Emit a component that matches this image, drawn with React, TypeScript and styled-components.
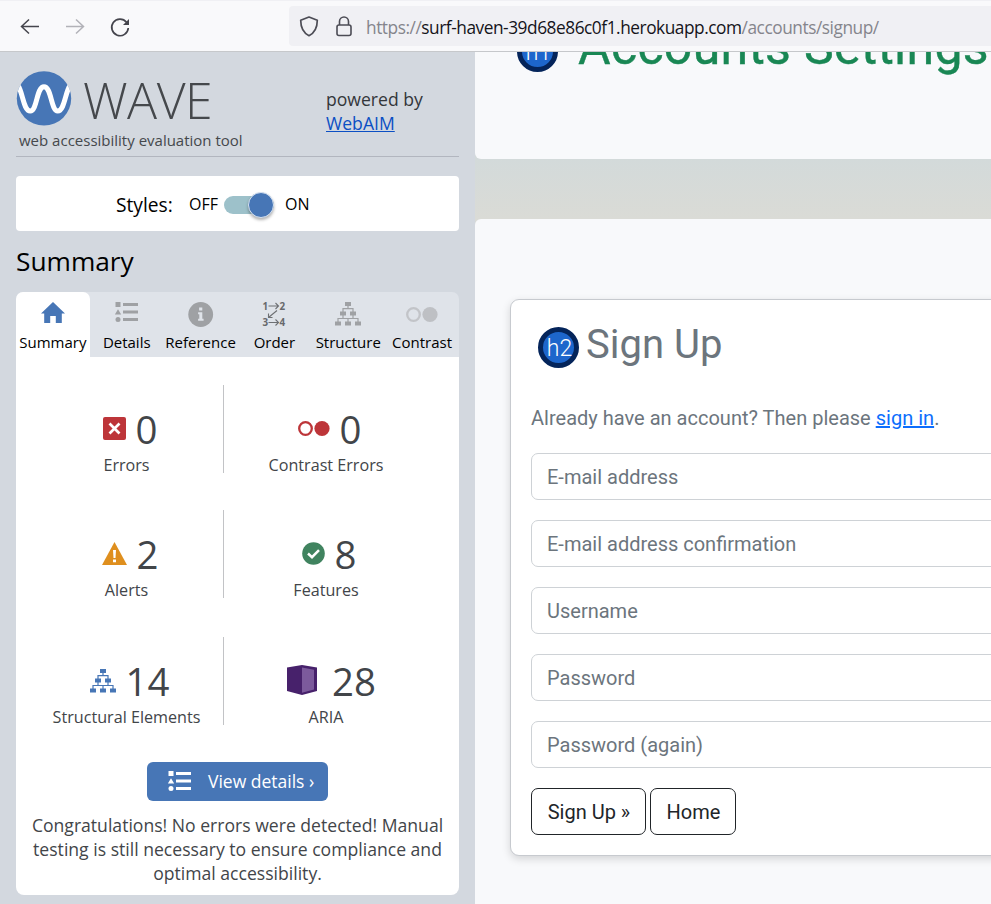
import React from "react";
import styled, { createGlobalStyle } from "styled-components";

const GlobalStyle = createGlobalStyle`
  * { box-sizing: border-box; }
  html, body { margin: 0; padding: 0; overflow: hidden; }
  body { font-family: "Open Sans", "Noto Sans", sans-serif; }
`;

const Window = styled.div`
  width: 991px;
  height: 904px;
  overflow: hidden;
  display: flex;
  flex-direction: column;
  background: #f8f9fb;
`;

/* ---------- Browser toolbar ---------- */

const Toolbar = styled.header`
  flex: none;
  height: 52px;
  display: flex;
  align-items: flex-start;
  background: #f9f9fb;
  border-top: 1px solid #f0f0f4;
  border-bottom: 1px solid #c6c8cb;
`;

const NavButtons = styled.nav`
  width: 289px;
  padding: 15px 0 0 19px;
  display: flex;
  gap: 23px;
  svg { display: block; }
`;

const NavIcon = styled.span<{ $dim?: boolean }>`
  width: 22px;
  height: 22px;
  color: ${(p) => (p.$dim ? "#b2b2b8" : "#45454d")};
`;

const AddressBar = styled.div`
  flex: 1;
  height: 40px;
  margin-top: 5px;
  padding: 0 0 0 9px;
  display: flex;
  align-items: center;
  border-radius: 4px 0 0 4px;
  background: #f0f0f4;
  color: #4c4c55;
`;

const AddressIcon = styled.span`
  width: 22px;
  height: 24px;
  margin-right: 13px;
  margin-top: -1px;
  svg { display: block; }
`;

const Url = styled.div`
  margin: 4px 0 0 -2px;
  font-family: "Open Sans", sans-serif;
  font-size: 17.3px;
  line-height: 24px;
  letter-spacing: -0.46px;
  white-space: nowrap;
  color: #85858c;
  b { font-weight: 400; color: #15141a; }
`;

/* ---------- Sidebar ---------- */

const Body = styled.div`
  flex: 1;
  min-height: 0;
  display: flex;
`;

const Sidebar = styled.aside`
  flex: none;
  width: 475px;
  padding: 0 16px;
  background: #d3d8df;
`;

const Brand = styled.div`
  height: 105px;
  display: flex;
  justify-content: space-between;
  border-bottom: 1px solid #b2b6bf;
`;

const BrandLeft = styled.div`
  padding-top: 19px;
`;

const LogoRow = styled.div`
  height: 56px;
  display: flex;
  svg { display: block; flex: none; }
`;

const Wordmark = styled.div`
  margin: 2px 0 0 11px;
  font-size: 50px;
  line-height: 54px;
  font-weight: 300;
  letter-spacing: -0.5px;
  color: #45484c;
`;

const Tagline = styled.div`
  padding-left: 3px;
  font-size: 15px;
  line-height: 26px;
  white-space: nowrap;
  color: #45484c;
`;

const Powered = styled.div`
  width: 133px;
  padding-top: 35px;
  font-size: 17.6px;
  line-height: 24px;
  color: #33363a;
  a { color: #0b4fc4; text-decoration: underline; }
`;

const StylesCard = styled.div`
  height: 55px;
  margin-top: 19px;
  padding-left: 100px;
  display: flex;
  align-items: center;
  border-radius: 4px;
  background: #fff;
  color: #000;
`;

const StylesLabel = styled.span`
  width: 73px;
  font-size: 19.2px;
  padding-top: 2px;
`;

const ToggleText = styled.span`
  font-size: 16px;
`;

const Track = styled.span`
  width: 50px;
  height: 18px;
  margin: 2px 11px 0 6px;
  display: flex;
  align-items: center;
  justify-content: flex-end;
  border-radius: 9px;
  background: #9dc1ca;
`;

const Knob = styled.span`
  flex: none;
  width: 26px;
  height: 26px;
  border-radius: 50%;
  border: 1px solid #d6e2f2;
  background: #4776b6;
  box-shadow: 0 2px 3px rgba(0, 0, 0, 0.3);
`;

const SideTitle = styled.h1`
  margin: 0;
  height: 61px;
  font-size: 26.3px;
  line-height: 61px;
  font-weight: 400;
  color: #000;
`;

const Tabs = styled.div`
  height: 65px;
  display: grid;
  grid-template-columns: repeat(6, 1fr);
  border-radius: 7px 7px 0 0;
  background: #dfe3e9;
`;

const Tab = styled.div<{ $active?: boolean }>`
  display: flex;
  flex-direction: column;
  align-items: center;
  border-radius: 7px 7px 0 0;
  background: ${(p) => (p.$active ? "#fff" : "transparent")};
  font-size: 15px;
  color: #000;
  white-space: nowrap;
  svg { display: block; height: 40px; flex: none; }
  span { line-height: 20px; }
`;

const Panel = styled.section`
  height: 538px;
  padding: 28px 31px 0 14px;
  border-radius: 0 0 8px 8px;
  background: #fff;
  color: #424549;
`;

const Stats = styled.div`
  display: grid;
  grid-template-columns: 194px 204px;
  grid-template-rows: 125px 127px 88px;
`;

const Stat = styled.div<{ $divided?: boolean }>`
  height: 88px;
  display: flex;
  flex-direction: column;
  align-items: center;
  padding-top: 19px;
  border-right: ${(p) => (p.$divided ? "1px solid #c2c3c6" : "0")};
`;

const Figure = styled.div<{ $gap: number; $lead: number }>`
  height: 51px;
  padding-left: ${(p) => p.$lead}px;
  display: flex;
  align-items: center;
  gap: ${(p) => p.$gap}px;
  font-size: 38.4px;
  line-height: 50px;
  svg { display: block; flex: none; }
  svg[height="40"] { margin-top: -4px; }
  svg[height="30"] { margin-top: -3px; }
  svg[height="23"] { margin-top: -1px; }
`;

const StatLabel = styled.div`
  font-size: 16.15px;
  line-height: 22px;
  white-space: nowrap;
`;

const DetailsButton = styled.button`
  width: 181px;
  height: 39px;
  margin: 37px 0 0 117px;
  padding: 0 0 2px 21px;
  display: flex;
  align-items: center;
  gap: 16px;
  border: 0;
  border-radius: 6px;
  background: #4776b6;
  color: #fff;
  font-family: inherit;
  font-size: 17.5px;
  white-space: nowrap;
  svg { flex: none; margin-top: 1px; }
`;

const Message = styled.p`
  margin: 12px -24px 0 -7px;
  font-size: 17.6px;
  line-height: 24px;
  text-align: center;
`;

/* ---------- Page under evaluation ---------- */

const Page = styled.main`
  flex: 1;
  min-width: 0;
  display: flex;
  flex-direction: column;
  overflow: hidden;
  background: linear-gradient(#d3dada 107px, #dadbd6 167px, #d3d8df 180px);
  font-family: Roboto, sans-serif;
`;

const Banner = styled.div`
  flex: none;
  height: 107px;
  padding-left: 42px;
  display: flex;
  overflow: hidden;
  border-radius: 0 0 0 6px;
  background: #f8f9fb;
`;

const BannerTitle = styled.h2`
  margin: -35px 0 0 20px;
  font-size: 50px;
  line-height: 60px;
  font-weight: 400;
  letter-spacing: 0.3px;
  white-space: nowrap;
  color: #198754;
  -webkit-text-stroke: 0.4px #198754;
`;

const HeadingBadge = styled.span<{ $banner?: boolean }>`
  flex: none;
  width: 41px;
  height: 41px;
  margin-top: ${(p) => (p.$banner ? "-21.5px" : "-0.5px")};
  display: flex;
  align-items: center;
  justify-content: center;
  border: 5px solid #04245a;
  border-radius: 50%;
  background: #1d66cc;
  font-size: 23px;
  line-height: 30px;
  font-weight: 300;
  padding: 3px 0 0 2px;
  color: #fff;
`;

const Content = styled.div`
  flex: none;
  height: 685px;
  margin-top: 60px;
  padding: 80px 0 0 35px;
  border-radius: 6px 0 0 0;
  background: #f8f9fb;
`;

const Card = styled.form`
  width: 700px;
  height: 557px;
  padding: 0 20px;
  border: 1px solid #c7cacf;
  border-radius: 9px;
  background: #fff;
  box-shadow: 0 3px 8px rgba(0, 0, 0, 0.15);
  color: #6c757d;
  font-size: 20px;
`;

const CardTitle = styled.div`
  height: 103px;
  padding: 27px 0 0 7px;
  display: flex;
`;

const TitleText = styled.h2`
  margin: -6px 0 0 7px;
  font-size: 40px;
  line-height: 48px;
  font-weight: 400;
  white-space: nowrap;
`;

const Prompt = styled.p`
  margin: 0 0 20px;
  line-height: 30px;
  white-space: nowrap;
  letter-spacing: 0.01px;
  a { color: #0d6efd; text-decoration: underline; }
`;

const Field = styled.input`
  display: block;
  width: 658px;
  height: 47px;
  margin: 0 0 20px;
  padding: 0 15px;
  border: 1px solid #ced2d6;
  border-radius: 7px;
  background: #fff;
  font: 400 20px/30px Roboto, sans-serif;
  &::placeholder { color: #6c757d; opacity: 1; }
`;

const Actions = styled.div`
  display: flex;
  gap: 4px;
`;

const ActionButton = styled.button<{ $w: number }>`
  width: ${(p) => p.$w}px;
  height: 47px;
  padding: 0 0 0 1px;
  border: 1px solid #212529;
  border-radius: 7px;
  background: #fff;
  color: #212529;
  font: 400 20px/30px Roboto, sans-serif;
  white-space: nowrap;
`;

/* ---------- Icons ---------- */

const ListIcon = ({ color, width = 24 }: { color: string; width?: number }) => (
  <svg width={width} height="40" viewBox="0 0 24 40" fill={color}>
    <path d="M0.5 10h5v5h-5zM3 17.2l3.2 5.3H-.2z" />
    <circle cx="3" cy="27.5" r="2.5" />
    <path d="M8 11h15v3H8zM8 18.6h15v3H8zM8 26h15v3H8z" />
  </svg>
);

const StructureIcon = ({ color }: { color: string }) => (
  <svg width="26" height="40" viewBox="0 0 26 40" fill={color}>
    <path d="M10 10h6v4h-6zM5 19.5h6v4H5zM15 19.5h6v4h-6zM0 29.500h6v4H0zM10 29.500h6v4h-6zM20 29.500h6v4h-6z" />
    <path
      d="M13 14v3M8 20v-3.3h10V20M8 23v3.5M18 23v3.5M3 30v-3.5h20V30M13 30v-3.5"
      fill="none"
      stroke={color}
      strokeWidth="1.200"
    />
  </svg>
);

const ContrastIcon = ({ ring, dot, cy = 22.5 }: { ring: string; dot: string; cy?: number }) => (
  <svg width="32" height="40" viewBox="0 0 32 40">
    <circle cx="7.5" cy={cy} r="6.3" fill="none" stroke={ring} strokeWidth="2.300" />
    <circle cx="24" cy={cy} r="7.6" fill={dot} />
  </svg>
);

const HomeIcon = () => (
  <svg width="25" height="40" viewBox="-0.500 0 25 40" fill="#4776b6">
    <path d="M12 10 0 21.5h3.2V31h6v-7h5.6v7h6v-9.5H24z" transform="translate(0.500 0)" />
  </svg>
);

const InfoIcon = () => (
  <svg width="26" height="40" viewBox="0 0 26 40">
    <circle cx="12.7" cy="22.5" r="12.4" fill="#9fa1a4" />
    <path d="M11.1 15.6h3.2v3h-3.2zM10.1 20.2h4.200v6.600h1.300v2h-5.500v-2h1.200v-4.600h-1.200z" fill="#dfe3e9" />
  </svg>
);

const OrderIcon = () => (
  <svg width="24" height="40" viewBox="0 0 24 40">
    <g fill="#67696c" fontFamily="Open Sans" fontWeight="700" fontSize="9.8">
      <text x="0.500" y="17.500">1</text>
      <text x="17.500" y="17.500">2</text>
      <text x="0.500" y="34">3</text>
      <text x="17.500" y="34">4</text>
    </g>
    <path
      d="M6.5 14h10M13.500 11l3 3-3 3M6.500 30.500h10M13.500 27.500l3 3-3 3M15 18.500l-8.500 7M6.500 21.500v4h4"
      fill="none"
      stroke="#6e7073"
      strokeWidth="1.100"
    />
  </svg>
);

const ErrorIcon = () => (
  <svg width="23" height="23" viewBox="0 0 23 23">
    <rect width="23" height="23" rx="2" fill="#bd3539" />
    <path d="m6.500 6.500 10 10m0-10-10 10" stroke="#fff" strokeWidth="2.700" />
  </svg>
);

const AlertIcon = () => (
  <svg width="25" height="23" viewBox="0 0 25 23">
    <path d="M12.500 0 25 23H0z" fill="#df8f1e" />
    <path d="M11 8h3l-.5 8h-2zM11 17.500h3v2.700h-3z" fill="#fff" />
  </svg>
);

const FeatureIcon = () => (
  <svg width="23" height="23" viewBox="0 0 23 23">
    <circle cx="11.500" cy="11.500" r="11.300" fill="#40835f" />
    <path d="m6 11.500 4 3.700 7-7" fill="none" stroke="#fff" strokeWidth="2.500" />
  </svg>
);

const AriaIcon = () => (
  <svg width="30" height="30" viewBox="0 0 30 30">
    <path d="M0 2.500 15 0l15 2.500v23.500l-15 4-15-4z" fill="#47216b" />
    <path d="m15 2.500 12 2.200v19.800L15 27.700z" fill="#7c5a9c" />
  </svg>
);

const WaveLogo = () => (
  <svg width="56" height="55" viewBox="0 0 56 55">
    <defs>
      <clipPath id="disc"><circle cx="28" cy="27.400" r="27.200" /></clipPath>
    </defs>
    <circle cx="28" cy="27.400" r="27.200" fill="#4776b6" />
    <path
      clipPath="url(#disc)"
      d="M2 14.500C7 22 7.500 40 14.300 40S20.500 15.700 28 15.700 35 40 41.700 40 49 22 54 14.500"
      fill="none"
      stroke="#fff"
      strokeWidth="5"
    />
  </svg>
);

const tabs = [
  { label: "Summary", icon: <HomeIcon /> },
  { label: "Details", icon: <ListIcon color="#9fa1a4" /> },
  { label: "Reference", icon: <InfoIcon /> },
  { label: "Order", icon: <OrderIcon /> },
  { label: "Structure", icon: <StructureIcon color="#9fa1a4" /> },
  { label: "Contrast", icon: <ContrastIcon ring="#c2c4c8" dot="#bec0c4" /> },
];

const stats = [
  { label: "Errors", value: 0, gap: 10, lead: 7, icon: <ErrorIcon /> },
  { label: "Contrast Errors", value: 0, gap: 10, lead: 7, icon: <ContrastIcon ring="#bd3539" dot="#bd3539" cy={21.5} /> },
  { label: "Alerts", value: 2, gap: 10, lead: 7, icon: <AlertIcon /> },
  { label: "Features", value: 8, gap: 10, lead: 6, icon: <FeatureIcon /> },
  { label: "Structural Elements", value: 14, gap: 10, lead: 6, icon: <StructureIcon color="#4776b6" /> },
  { label: "ARIA", value: 28, gap: 15, lead: 11, icon: <AriaIcon /> },
];

const fields = ["E-mail address", "E-mail address confirmation", "Username", "Password", "Password (again)"];

export default function App() {
  return (
    <Window>
      <GlobalStyle />
      <Toolbar>
        <NavButtons>
          <NavIcon>
            <svg width="22" height="22" viewBox="0 0 22 22" fill="none" stroke="currentColor" strokeWidth="1.500">
              <path d="M20 10.500H3M10 3.500l-7.500 7 7.500 7" />
            </svg>
          </NavIcon>
          <NavIcon $dim>
            <svg width="22" height="22" viewBox="0 0 22 22" fill="none" stroke="currentColor" strokeWidth="1.500">
              <path d="M2 10.500h17M12 3.500l7.500 7-7.500 7" />
            </svg>
          </NavIcon>
          <NavIcon>
            <svg width="22" height="22" viewBox="0 0 22 22" fill="none" stroke="currentColor" strokeWidth="1.700">
              <path d="M17.500 6.200A8.300 8.300 0 1 0 19.300 12" />
              <path d="M20 3v6h-6z" fill="currentColor" stroke="none" />
            </svg>
          </NavIcon>
        </NavButtons>
        <AddressBar>
          <AddressIcon>
            <svg width="22" height="24" viewBox="0 0 22 24" fill="none" stroke="currentColor" strokeWidth="1.700" strokeLinejoin="round">
              <path d="M11 3 19.300 6.300C19.300 13 17.500 18.500 11 21.700 4.500 18.500 2.700 13 2.700 6.300z" />
            </svg>
          </AddressIcon>
          <AddressIcon>
            <svg width="22" height="24" viewBox="0 0 22 24" fill="none" stroke="currentColor" strokeWidth="1.600">
              <rect x="4" y="11" width="14" height="10.500" rx="2" />
              <path d="M6.500 11V7.500a4.500 4.500 0 0 1 9 0V11" />
            </svg>
          </AddressIcon>
          <Url>
            https://<b>surf-haven-39d68e86c0f1.herokuapp.com</b>/accounts/signup/
          </Url>
        </AddressBar>
      </Toolbar>
      <Body>
        <Sidebar>
          <Brand>
            <BrandLeft>
              <LogoRow>
                <WaveLogo />
                <Wordmark>WAVE</Wordmark>
              </LogoRow>
              <Tagline>web accessibility evaluation tool</Tagline>
            </BrandLeft>
            <Powered>
              powered by
              <br />
              <a>WebAIM</a>
            </Powered>
          </Brand>
          <StylesCard>
            <StylesLabel>Styles:</StylesLabel>
            <ToggleText>OFF</ToggleText>
            <Track><Knob /></Track>
            <ToggleText>ON</ToggleText>
          </StylesCard>
          <SideTitle>Summary</SideTitle>
          <Tabs>
            {tabs.map((t, i) => (
              <Tab key={t.label} $active={i === 0}>
                {t.icon}
                <span>{t.label}</span>
              </Tab>
            ))}
          </Tabs>
          <Panel>
            <Stats>
              {stats.map((s, i) => (
                <Stat key={s.label} $divided={i % 2 === 0}>
                  <Figure $gap={s.gap} $lead={s.lead}>
                    {s.icon}
                    {s.value}
                  </Figure>
                  <StatLabel>{s.label}</StatLabel>
                </Stat>
              ))}
            </Stats>
            <DetailsButton>
              <ListIcon color="#fff" />
              View details ›
            </DetailsButton>
            <Message>
              Congratulations! No errors were detected! Manual testing is still necessary to ensure compliance and
              optimal accessibility.
            </Message>
          </Panel>
        </Sidebar>
        <Page>
          <Banner>
            <HeadingBadge $banner>h1</HeadingBadge>
            <BannerTitle>Accounts Settings</BannerTitle>
          </Banner>
          <Content>
            <Card>
              <CardTitle>
                <HeadingBadge>h2</HeadingBadge>
                <TitleText>Sign Up</TitleText>
              </CardTitle>
              <Prompt>
                Already have an account? Then please <a>sign in</a>.
              </Prompt>
              {fields.map((f) => (
                <Field key={f} placeholder={f} />
              ))}
              <Actions>
                <ActionButton type="button" $w={115}>Sign Up »</ActionButton>
                <ActionButton type="button" $w={86}>Home</ActionButton>
              </Actions>
            </Card>
          </Content>
        </Page>
      </Body>
    </Window>
  );
}
